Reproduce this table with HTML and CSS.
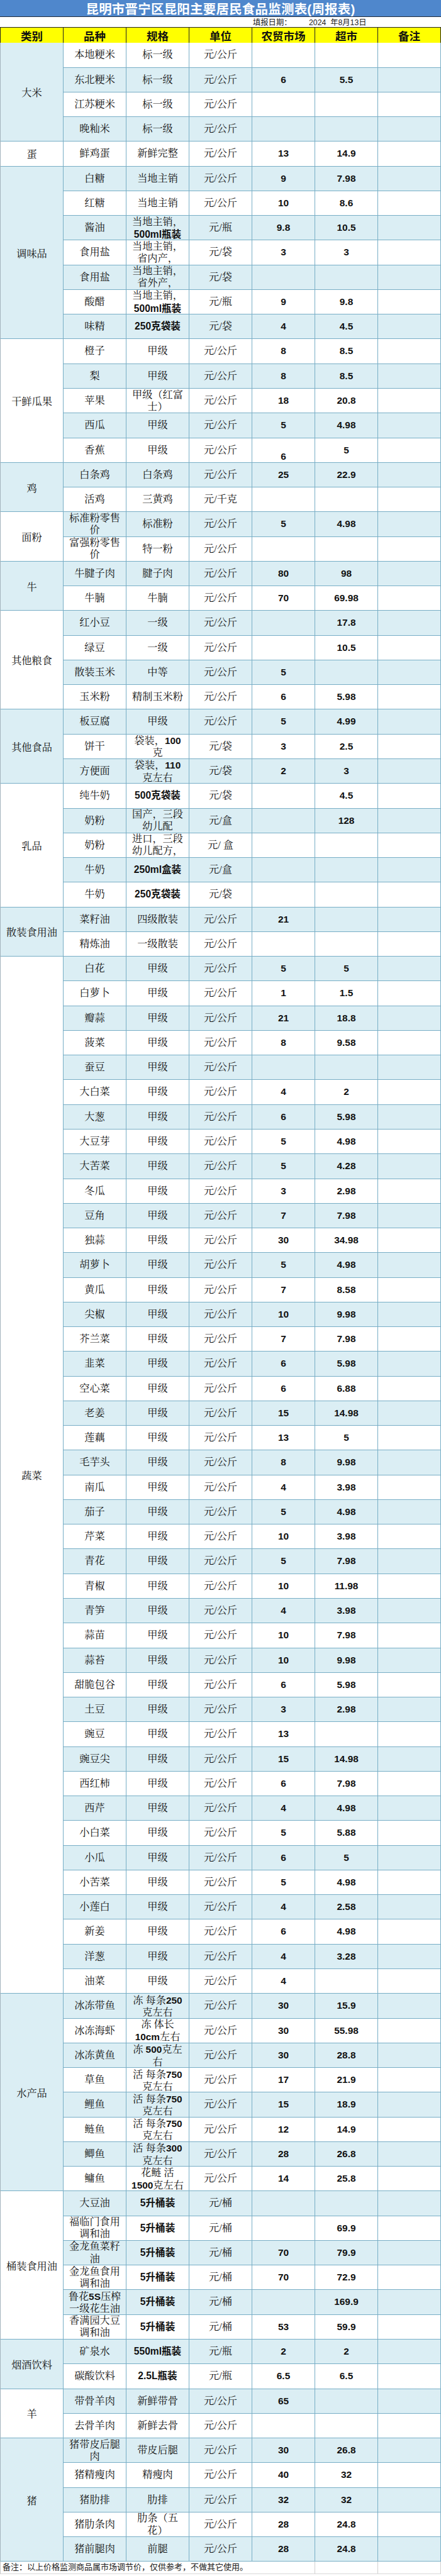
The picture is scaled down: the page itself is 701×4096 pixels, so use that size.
FILE: index.html
```html
<!DOCTYPE html>
<html lang="zh">
<head>
<meta charset="utf-8">
<title>昆明市晋宁区昆阳主要居民食品监测表(周报表)</title>
<link rel="stylesheet" href="styles.css">
</head>
<body>
<div class="sheet">
  <div class="title">昆明市晋宁区昆阳主要居民食品监测表(周报表)</div>
  <div class="date"><span class="lbl">填报日期：</span><span>2024&nbsp;&nbsp;年8月13日</span></div>
  <div class="hdr">
    <div class="h">类别</div><div class="h">品种</div><div class="h">规格</div><div class="h">单位</div><div class="h">农贸市场</div><div class="h">超市</div><div class="h">备注</div>
  </div>
  <div class="grid">
    <!-- 大米 -->
    <div class="cat b s4">大米</div>
    <div class="r"><div class="c">本地粳米</div><div class="c">标一级</div><div class="c">元/公斤</div><div class="c n"></div><div class="c n"></div><div class="c"></div></div>
    <div class="r b"><div class="c">东北粳米</div><div class="c">标一级</div><div class="c">元/公斤</div><div class="c n">6</div><div class="c n">5.5</div><div class="c"></div></div>
    <div class="r"><div class="c">江苏粳米</div><div class="c">标一级</div><div class="c">元/公斤</div><div class="c n"></div><div class="c n"></div><div class="c"></div></div>
    <div class="r b"><div class="c">晚籼米</div><div class="c">标一级</div><div class="c">元/公斤</div><div class="c n"></div><div class="c n"></div><div class="c"></div></div>
    <!-- 蛋 -->
    <div class="cat">蛋</div>
    <div class="r"><div class="c">鲜鸡蛋</div><div class="c">新鲜完整</div><div class="c">元/公斤</div><div class="c n">13</div><div class="c n">14.9</div><div class="c"></div></div>
    <!-- 调味品 -->
    <div class="cat b s7">调味品</div>
    <div class="r b"><div class="c">白糖</div><div class="c">当地主销</div><div class="c">元/公斤</div><div class="c n">9</div><div class="c n">7.98</div><div class="c"></div></div>
    <div class="r"><div class="c">红糖</div><div class="c">当地主销</div><div class="c">元/公斤</div><div class="c n">10</div><div class="c n">8.6</div><div class="c"></div></div>
    <div class="r b"><div class="c">酱油</div><div class="c w">当地主销，<br><span class="bb">500ml瓶装</span></div><div class="c">元/瓶</div><div class="c n">9.8</div><div class="c n">10.5</div><div class="c"></div></div>
    <div class="r"><div class="c">食用盐</div><div class="c w">当地主销，<br>省内产，</div><div class="c">元/袋</div><div class="c n">3</div><div class="c n">3</div><div class="c"></div></div>
    <div class="r b"><div class="c">食用盐</div><div class="c w">当地主销，<br>省外产，</div><div class="c">元/袋</div><div class="c n"></div><div class="c n"></div><div class="c"></div></div>
    <div class="r"><div class="c">酸醋</div><div class="c w">当地主销，<br><span class="bb">500ml瓶装</span></div><div class="c">元/瓶</div><div class="c n">9</div><div class="c n">9.8</div><div class="c"></div></div>
    <div class="r b"><div class="c">味精</div><div class="c bb">250克袋装</div><div class="c">元/袋</div><div class="c n">4</div><div class="c n">4.5</div><div class="c"></div></div>
    <!-- 干鲜瓜果 -->
    <div class="cat s5">干鲜瓜果</div>
    <div class="r"><div class="c">橙子</div><div class="c">甲级</div><div class="c">元/公斤</div><div class="c n">8</div><div class="c n">8.5</div><div class="c"></div></div>
    <div class="r b"><div class="c">梨</div><div class="c">甲级</div><div class="c">元/公斤</div><div class="c n">8</div><div class="c n">8.5</div><div class="c"></div></div>
    <div class="r"><div class="c">苹果</div><div class="c w">甲级（红富<br>士）</div><div class="c">元/公斤</div><div class="c n">18</div><div class="c n">20.8</div><div class="c"></div></div>
    <div class="r b"><div class="c">西瓜</div><div class="c">甲级</div><div class="c">元/公斤</div><div class="c n">5</div><div class="c n">4.98</div><div class="c"></div></div>
    <div class="r"><div class="c">香蕉</div><div class="c">甲级</div><div class="c">元/公斤</div><div class="c n low">6</div><div class="c n">5</div><div class="c"></div></div>
    <!-- 鸡 -->
    <div class="cat b s2">鸡</div>
    <div class="r b"><div class="c">白条鸡</div><div class="c">白条鸡</div><div class="c">元/公斤</div><div class="c n">25</div><div class="c n">22.9</div><div class="c"></div></div>
    <div class="r"><div class="c">活鸡</div><div class="c">三黄鸡</div><div class="c">元/千克</div><div class="c n"></div><div class="c n"></div><div class="c"></div></div>
    <!-- 面粉 -->
    <div class="cat s2">面粉</div>
    <div class="r b"><div class="c w">标准粉零售<br>价</div><div class="c">标准粉</div><div class="c">元/公斤</div><div class="c n">5</div><div class="c n">4.98</div><div class="c"></div></div>
    <div class="r"><div class="c w">富强粉零售<br>价</div><div class="c">特一粉</div><div class="c">元/公斤</div><div class="c n"></div><div class="c n"></div><div class="c"></div></div>
    <!-- 牛 -->
    <div class="cat b s2">牛</div>
    <div class="r b"><div class="c">牛腱子肉</div><div class="c">腱子肉</div><div class="c">元/公斤</div><div class="c n">80</div><div class="c n">98</div><div class="c"></div></div>
    <div class="r"><div class="c">牛腩</div><div class="c">牛腩</div><div class="c">元/公斤</div><div class="c n">70</div><div class="c n">69.98</div><div class="c"></div></div>
    <!-- 其他粮食 -->
    <div class="cat s4">其他粮食</div>
    <div class="r b"><div class="c">红小豆</div><div class="c">一级</div><div class="c">元/公斤</div><div class="c n"></div><div class="c n">17.8</div><div class="c"></div></div>
    <div class="r"><div class="c">绿豆</div><div class="c">一级</div><div class="c">元/公斤</div><div class="c n"></div><div class="c n">10.5</div><div class="c"></div></div>
    <div class="r b"><div class="c">散装玉米</div><div class="c">中等</div><div class="c">元/公斤</div><div class="c n">5</div><div class="c n"></div><div class="c"></div></div>
    <div class="r"><div class="c">玉米粉</div><div class="c">精制玉米粉</div><div class="c">元/公斤</div><div class="c n">6</div><div class="c n">5.98</div><div class="c"></div></div>
    <!-- 其他食品 -->
    <div class="cat b s3">其他食品</div>
    <div class="r b"><div class="c">板豆腐</div><div class="c">甲级</div><div class="c">元/公斤</div><div class="c n">5</div><div class="c n">4.99</div><div class="c"></div></div>
    <div class="r"><div class="c">饼干</div><div class="c w">袋装，<span class="d">100</span><br>克</div><div class="c">元/袋</div><div class="c n">3</div><div class="c n">2.5</div><div class="c"></div></div>
    <div class="r b"><div class="c">方便面</div><div class="c w">袋装，<span class="d">110</span><br>克左右</div><div class="c">元/袋</div><div class="c n">2</div><div class="c n">3</div><div class="c"></div></div>
    <!-- 乳品 -->
    <div class="cat s5">乳品</div>
    <div class="r"><div class="c">纯牛奶</div><div class="c bb">500克袋装</div><div class="c">元/袋</div><div class="c n"></div><div class="c n">4.5</div><div class="c"></div></div>
    <div class="r b"><div class="c">奶粉</div><div class="c w">国产，三段<br>幼儿配</div><div class="c">元/盒</div><div class="c n"></div><div class="c n">128</div><div class="c"></div></div>
    <div class="r"><div class="c">奶粉</div><div class="c w">进口，三段<br>幼儿配方，</div><div class="c">元/ 盒</div><div class="c n"></div><div class="c n"></div><div class="c"></div></div>
    <div class="r b"><div class="c">牛奶</div><div class="c bb">250ml盒装</div><div class="c">元/盒</div><div class="c n"></div><div class="c n"></div><div class="c"></div></div>
    <div class="r"><div class="c">牛奶</div><div class="c bb">250克袋装</div><div class="c">元/袋</div><div class="c n"></div><div class="c n"></div><div class="c"></div></div>
    <!-- 散装食用油 -->
    <div class="cat b s2">散装食用油</div>
    <div class="r b"><div class="c">菜籽油</div><div class="c">四级散装</div><div class="c">元/公斤</div><div class="c n">21</div><div class="c n"></div><div class="c"></div></div>
    <div class="r"><div class="c">精炼油</div><div class="c">一级散装</div><div class="c">元/公斤</div><div class="c n"></div><div class="c n"></div><div class="c"></div></div>
    <!-- 蔬菜 -->
    <div class="cat s42">蔬菜</div>
    <div class="r b"><div class="c">白花</div><div class="c">甲级</div><div class="c">元/公斤</div><div class="c n">5</div><div class="c n">5</div><div class="c"></div></div>
    <div class="r"><div class="c">白萝卜</div><div class="c">甲级</div><div class="c">元/公斤</div><div class="c n">1</div><div class="c n">1.5</div><div class="c"></div></div>
    <div class="r b"><div class="c">瓣蒜</div><div class="c">甲级</div><div class="c">元/公斤</div><div class="c n">21</div><div class="c n">18.8</div><div class="c"></div></div>
    <div class="r"><div class="c">菠菜</div><div class="c">甲级</div><div class="c">元/公斤</div><div class="c n">8</div><div class="c n">9.58</div><div class="c"></div></div>
    <div class="r b"><div class="c">蚕豆</div><div class="c">甲级</div><div class="c">元/公斤</div><div class="c n"></div><div class="c n"></div><div class="c"></div></div>
    <div class="r"><div class="c">大白菜</div><div class="c">甲级</div><div class="c">元/公斤</div><div class="c n">4</div><div class="c n">2</div><div class="c"></div></div>
    <div class="r b"><div class="c">大葱</div><div class="c">甲级</div><div class="c">元/公斤</div><div class="c n">6</div><div class="c n">5.98</div><div class="c"></div></div>
    <div class="r"><div class="c">大豆芽</div><div class="c">甲级</div><div class="c">元/公斤</div><div class="c n">5</div><div class="c n">4.98</div><div class="c"></div></div>
    <div class="r b"><div class="c">大苦菜</div><div class="c">甲级</div><div class="c">元/公斤</div><div class="c n">5</div><div class="c n">4.28</div><div class="c"></div></div>
    <div class="r"><div class="c">冬瓜</div><div class="c">甲级</div><div class="c">元/公斤</div><div class="c n">3</div><div class="c n">2.98</div><div class="c"></div></div>
    <div class="r b"><div class="c">豆角</div><div class="c">甲级</div><div class="c">元/公斤</div><div class="c n">7</div><div class="c n">7.98</div><div class="c"></div></div>
    <div class="r"><div class="c">独蒜</div><div class="c">甲级</div><div class="c">元/公斤</div><div class="c n">30</div><div class="c n">34.98</div><div class="c"></div></div>
    <div class="r b"><div class="c">胡萝卜</div><div class="c">甲级</div><div class="c">元/公斤</div><div class="c n">5</div><div class="c n">4.98</div><div class="c"></div></div>
    <div class="r"><div class="c">黄瓜</div><div class="c">甲级</div><div class="c">元/公斤</div><div class="c n">7</div><div class="c n">8.58</div><div class="c"></div></div>
    <div class="r b"><div class="c">尖椒</div><div class="c">甲级</div><div class="c">元/公斤</div><div class="c n">10</div><div class="c n">9.98</div><div class="c"></div></div>
    <div class="r"><div class="c">芥兰菜</div><div class="c">甲级</div><div class="c">元/公斤</div><div class="c n">7</div><div class="c n">7.98</div><div class="c"></div></div>
    <div class="r b"><div class="c">韭菜</div><div class="c">甲级</div><div class="c">元/公斤</div><div class="c n">6</div><div class="c n">5.98</div><div class="c"></div></div>
    <div class="r"><div class="c">空心菜</div><div class="c">甲级</div><div class="c">元/公斤</div><div class="c n">6</div><div class="c n">6.88</div><div class="c"></div></div>
    <div class="r b"><div class="c">老姜</div><div class="c">甲级</div><div class="c">元/公斤</div><div class="c n">15</div><div class="c n">14.98</div><div class="c"></div></div>
    <div class="r"><div class="c">莲藕</div><div class="c">甲级</div><div class="c">元/公斤</div><div class="c n">13</div><div class="c n">5</div><div class="c"></div></div>
    <div class="r b"><div class="c">毛芋头</div><div class="c">甲级</div><div class="c">元/公斤</div><div class="c n">8</div><div class="c n">9.98</div><div class="c"></div></div>
    <div class="r"><div class="c">南瓜</div><div class="c">甲级</div><div class="c">元/公斤</div><div class="c n">4</div><div class="c n">3.98</div><div class="c"></div></div>
    <div class="r b"><div class="c">茄子</div><div class="c">甲级</div><div class="c">元/公斤</div><div class="c n">5</div><div class="c n">4.98</div><div class="c"></div></div>
    <div class="r"><div class="c">芹菜</div><div class="c">甲级</div><div class="c">元/公斤</div><div class="c n">10</div><div class="c n">3.98</div><div class="c"></div></div>
    <div class="r b"><div class="c">青花</div><div class="c">甲级</div><div class="c">元/公斤</div><div class="c n">5</div><div class="c n">7.98</div><div class="c"></div></div>
    <div class="r"><div class="c">青椒</div><div class="c">甲级</div><div class="c">元/公斤</div><div class="c n">10</div><div class="c n">11.98</div><div class="c"></div></div>
    <div class="r b"><div class="c">青笋</div><div class="c">甲级</div><div class="c">元/公斤</div><div class="c n">4</div><div class="c n">3.98</div><div class="c"></div></div>
    <div class="r"><div class="c">蒜苗</div><div class="c">甲级</div><div class="c">元/公斤</div><div class="c n">10</div><div class="c n">7.98</div><div class="c"></div></div>
    <div class="r b"><div class="c">蒜苔</div><div class="c">甲级</div><div class="c">元/公斤</div><div class="c n">10</div><div class="c n">9.98</div><div class="c"></div></div>
    <div class="r"><div class="c">甜脆包谷</div><div class="c">甲级</div><div class="c">元/公斤</div><div class="c n">6</div><div class="c n">5.98</div><div class="c"></div></div>
    <div class="r b"><div class="c">土豆</div><div class="c">甲级</div><div class="c">元/公斤</div><div class="c n">3</div><div class="c n">2.98</div><div class="c"></div></div>
    <div class="r"><div class="c">豌豆</div><div class="c">甲级</div><div class="c">元/公斤</div><div class="c n">13</div><div class="c n"></div><div class="c"></div></div>
    <div class="r b"><div class="c">豌豆尖</div><div class="c">甲级</div><div class="c">元/公斤</div><div class="c n">15</div><div class="c n">14.98</div><div class="c"></div></div>
    <div class="r"><div class="c">西红柿</div><div class="c">甲级</div><div class="c">元/公斤</div><div class="c n">6</div><div class="c n">7.98</div><div class="c"></div></div>
    <div class="r b"><div class="c">西芹</div><div class="c">甲级</div><div class="c">元/公斤</div><div class="c n">4</div><div class="c n">4.98</div><div class="c"></div></div>
    <div class="r"><div class="c">小白菜</div><div class="c">甲级</div><div class="c">元/公斤</div><div class="c n">5</div><div class="c n">5.88</div><div class="c"></div></div>
    <div class="r b"><div class="c">小瓜</div><div class="c">甲级</div><div class="c">元/公斤</div><div class="c n">6</div><div class="c n">5</div><div class="c"></div></div>
    <div class="r"><div class="c">小苦菜</div><div class="c">甲级</div><div class="c">元/公斤</div><div class="c n">5</div><div class="c n">4.98</div><div class="c"></div></div>
    <div class="r b"><div class="c">小莲白</div><div class="c">甲级</div><div class="c">元/公斤</div><div class="c n">4</div><div class="c n">2.58</div><div class="c"></div></div>
    <div class="r"><div class="c">新姜</div><div class="c">甲级</div><div class="c">元/公斤</div><div class="c n">6</div><div class="c n">4.98</div><div class="c"></div></div>
    <div class="r b"><div class="c">洋葱</div><div class="c">甲级</div><div class="c">元/公斤</div><div class="c n">4</div><div class="c n">3.28</div><div class="c"></div></div>
    <div class="r"><div class="c">油菜</div><div class="c">甲级</div><div class="c">元/公斤</div><div class="c n">4</div><div class="c n"></div><div class="c"></div></div>
    <!-- 水产品 -->
    <div class="cat b s8">水产品</div>
    <div class="r b"><div class="c">冰冻带鱼</div><div class="c w">冻 每条<span class="d">250</span><br>克左右</div><div class="c">元/公斤</div><div class="c n">30</div><div class="c n">15.9</div><div class="c"></div></div>
    <div class="r"><div class="c">冰冻海虾</div><div class="c w">冻 体长<br><span class="d">10cm</span>左右</div><div class="c">元/公斤</div><div class="c n">30</div><div class="c n">55.98</div><div class="c"></div></div>
    <div class="r b"><div class="c">冰冻黄鱼</div><div class="c w">冻 <span class="d">500</span>克左<br>右</div><div class="c">元/公斤</div><div class="c n">30</div><div class="c n">28.8</div><div class="c"></div></div>
    <div class="r"><div class="c">草鱼</div><div class="c w">活 每条<span class="d">750</span><br>克左右</div><div class="c">元/公斤</div><div class="c n">17</div><div class="c n">21.9</div><div class="c"></div></div>
    <div class="r b"><div class="c">鲤鱼</div><div class="c w">活 每条<span class="d">750</span><br>克左右</div><div class="c">元/公斤</div><div class="c n">15</div><div class="c n">18.9</div><div class="c"></div></div>
    <div class="r"><div class="c">鲢鱼</div><div class="c w">活 每条<span class="d">750</span><br>克左右</div><div class="c">元/公斤</div><div class="c n">12</div><div class="c n">14.9</div><div class="c"></div></div>
    <div class="r b"><div class="c">鲫鱼</div><div class="c w">活 每条<span class="d">300</span><br>克左右</div><div class="c">元/公斤</div><div class="c n">28</div><div class="c n">26.8</div><div class="c"></div></div>
    <div class="r"><div class="c">鳙鱼</div><div class="c w">花鲢 活<br><span class="d">1500</span>克左右</div><div class="c">元/公斤</div><div class="c n">14</div><div class="c n">25.8</div><div class="c"></div></div>
    <!-- 桶装食用油 -->
    <div class="cat s6">桶装食用油</div>
    <div class="r b"><div class="c">大豆油</div><div class="c bb">5升桶装</div><div class="c">元/桶</div><div class="c n"></div><div class="c n"></div><div class="c"></div></div>
    <div class="r"><div class="c w">福临门食用<br>调和油</div><div class="c bb">5升桶装</div><div class="c">元/桶</div><div class="c n"></div><div class="c n">69.9</div><div class="c"></div></div>
    <div class="r b"><div class="c w">金龙鱼菜籽<br>油</div><div class="c bb">5升桶装</div><div class="c">元/桶</div><div class="c n">70</div><div class="c n">79.9</div><div class="c"></div></div>
    <div class="r"><div class="c w">金龙鱼食用<br>调和油</div><div class="c bb">5升桶装</div><div class="c">元/桶</div><div class="c n">70</div><div class="c n">72.9</div><div class="c"></div></div>
    <div class="r b"><div class="c w">鲁花<span class="d">5S</span>压榨<br>一级花生油</div><div class="c bb">5升桶装</div><div class="c">元/桶</div><div class="c n"></div><div class="c n">169.9</div><div class="c"></div></div>
    <div class="r"><div class="c w">香满园大豆<br>调和油</div><div class="c bb">5升桶装</div><div class="c">元/桶</div><div class="c n">53</div><div class="c n">59.9</div><div class="c"></div></div>
    <!-- 烟酒饮料 -->
    <div class="cat b s2">烟酒饮料</div>
    <div class="r b"><div class="c">矿泉水</div><div class="c bb">550ml瓶装</div><div class="c">元/瓶</div><div class="c n">2</div><div class="c n">2</div><div class="c"></div></div>
    <div class="r"><div class="c">碳酸饮料</div><div class="c bb">2.5L瓶装</div><div class="c">元/瓶</div><div class="c n">6.5</div><div class="c n">6.5</div><div class="c"></div></div>
    <!-- 羊 -->
    <div class="cat s2">羊</div>
    <div class="r b"><div class="c">带骨羊肉</div><div class="c">新鲜带骨</div><div class="c">元/公斤</div><div class="c n">65</div><div class="c n"></div><div class="c"></div></div>
    <div class="r"><div class="c">去骨羊肉</div><div class="c">新鲜去骨</div><div class="c">元/公斤</div><div class="c n"></div><div class="c n"></div><div class="c"></div></div>
    <!-- 猪 -->
    <div class="cat b s5">猪</div>
    <div class="r b"><div class="c w">猪带皮后腿<br>肉</div><div class="c">带皮后腿</div><div class="c">元/公斤</div><div class="c n">30</div><div class="c n">26.8</div><div class="c"></div></div>
    <div class="r"><div class="c">猪精瘦肉</div><div class="c">精瘦肉</div><div class="c">元/公斤</div><div class="c n">40</div><div class="c n">32</div><div class="c"></div></div>
    <div class="r b"><div class="c">猪肋排</div><div class="c">肋排</div><div class="c">元/公斤</div><div class="c n">32</div><div class="c n">32</div><div class="c"></div></div>
    <div class="r"><div class="c">猪肋条肉</div><div class="c w">肋条（五<br>花）</div><div class="c">元/公斤</div><div class="c n">28</div><div class="c n">24.8</div><div class="c"></div></div>
    <div class="r b"><div class="c">猪前腿肉</div><div class="c">前腿</div><div class="c">元/公斤</div><div class="c n">28</div><div class="c n">24.8</div><div class="c"></div></div>
  </div>
  <div class="foot">
    <div class="fnote">备注：以上价格监测商品属市场调节价，仅供参考，不做其它使用。</div>
    <div class="fc"></div><div class="fc"></div><div class="fc"></div>
  </div>
</div>
</body>
</html>
```

FILE: styles.css
```css
html, body {
  margin: 0;
  padding: 0;
  background: #ffffff;
}

.sheet {
  width: 701px;
  color: #111;
  font-family: "Liberation Serif", "Noto Serif CJK SC", "Noto Sans CJK SC", serif;
}

.title {
  height: 27.3px;
  box-sizing: border-box;
  background: #4f87cc;
  border-bottom: 1px solid #1d2a3a;
  color: #ffffff;
  font-family: "Liberation Sans", "Noto Sans CJK SC", sans-serif;
  font-weight: 700;
  font-size: 20.5px;
  display: flex;
  align-items: center;
  justify-content: center;
  letter-spacing: 0.2px;
}

.date {
  height: 16.3px;
  box-sizing: border-box;
  border-bottom: 1px solid #222;
  display: flex;
  align-items: center;
  padding-left: 402px;
  font-family: "Liberation Sans", "Noto Sans CJK SC", sans-serif;
  font-size: 12.3px;
  color: #222;
}

.date .lbl {
  width: 89px;
}

.hdr {
  display: grid;
  grid-template-columns: repeat(7, 100px);
  height: 24.7px;
  border-left: 1px solid #222;
  width: 700px;
}

.h {
  background: #ffff00;
  border-right: 1px solid #222;
  border-bottom: 1px solid #222;
  box-sizing: border-box;
  font-family: "Liberation Sans", "Noto Sans CJK SC", sans-serif;
  font-weight: 700;
  font-size: 17.5px;
  display: flex;
  align-items: center;
  justify-content: center;
}

.grid {
  display: grid;
  grid-template-columns: repeat(7, 100px);
  grid-auto-rows: 39.28px;
  border-left: 1px solid #a3b3bc;
  width: 700px;
}

.r {
  display: contents;
}

.c {
  box-sizing: border-box;
  border-right: 1px solid #78aec6;
  border-bottom: 1px solid #78aec6;
  background: #ffffff;
  text-align: center;
  font-size: 16.2px;
  line-height: 38.28px;
  white-space: nowrap;
  overflow: hidden;
}

.r.b > .c {
  background: #dbeef4;
}

.c.w {
  line-height: 19.2px;
  padding-top: 0.5px;
}

.c.n {
  font-family: "Liberation Sans", Arial, sans-serif;
  font-weight: 700;
  font-size: 15.4px;
}

.c.low {
  padding-top: 10.8px;
}

.bb {
  font-family: "Liberation Sans", "Noto Sans CJK SC", sans-serif;
  font-weight: 700;
  font-size: 15.6px;
}

.d {
  font-family: "Liberation Sans", Arial, sans-serif;
  font-weight: 700;
  font-size: 15.4px;
}

.cat {
  box-sizing: border-box;
  border-right: 1px solid #78aec6;
  border-bottom: 1px solid #78aec6;
  background: #ffffff;
  display: flex;
  align-items: center;
  justify-content: center;
  font-size: 16.2px;
  white-space: nowrap;
}

.cat.b {
  background: #dbeef4;
}

.s2 { grid-row: span 2; }
.s3 { grid-row: span 3; }
.s4 { grid-row: span 4; }
.s5 { grid-row: span 5; }
.s6 { grid-row: span 6; }
.s7 { grid-row: span 7; }
.s8 { grid-row: span 8; }
.s42 { grid-row: span 42; }

.foot {
  display: grid;
  grid-template-columns: 400px repeat(3, 100px);
  height: 18.8px;
  width: 700px;
  border-left: 1px solid #c8c8c8;
  border-bottom: 1px solid #d8d8d8;
  box-sizing: content-box;
}

.fnote {
  font-family: "Liberation Sans", "Noto Sans CJK SC", sans-serif;
  font-size: 13px;
  line-height: 18.8px;
  padding-left: 3px;
  white-space: nowrap;
  color: #222;
}

.fc {
  border-right: 1px solid #d0d0d0;
}
```
